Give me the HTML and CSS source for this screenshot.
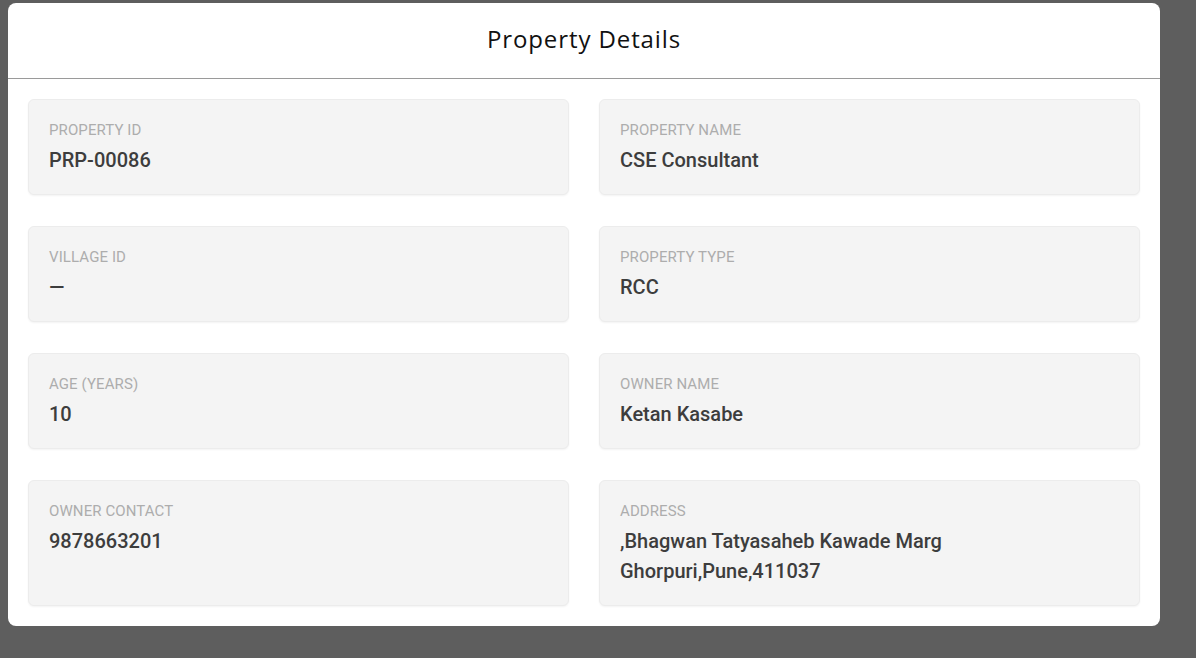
FILE: index.html
```html
<!DOCTYPE html>
<html>
<head>
<meta charset="utf-8">
<link rel="stylesheet" href="styles.css">
</head>
<body>
<div class="modal">
  <div class="modal-header"><h2 class="title">Property Details</h2></div>
  <div class="modal-body">
    <div class="card"><div class="label">Property ID</div><div class="value">PRP-00086</div></div>
    <div class="card"><div class="label">Property Name</div><div class="value">CSE Consultant</div></div>
    <div class="card"><div class="label">Village ID</div><div class="value">—</div></div>
    <div class="card"><div class="label">Property Type</div><div class="value">RCC</div></div>
    <div class="card"><div class="label">Age (Years)</div><div class="value">10</div></div>
    <div class="card"><div class="label">Owner Name</div><div class="value">Ketan Kasabe</div></div>
    <div class="card"><div class="label">Owner Contact</div><div class="value">9878663201</div></div>
    <div class="card"><div class="label">Address</div><div class="value">,Bhagwan Tatyasaheb Kawade Marg<br>Ghorpuri,Pune,411037</div></div>
  </div>
</div>
</body>
</html>
```
FILE: styles.css
```css
html, body { margin: 0; padding: 0; }
body {
  background: #5e5e5e;
  font-family: Roboto, "Liberation Sans", sans-serif;
  width: 1196px;
  height: 658px;
  overflow: hidden;
}
.modal {
  margin: 3px 0 0 8px;
  width: 1152px;
  background: #fff;
  border-radius: 8px;
  overflow: hidden;
}
.modal-header {
  height: 76px;
  border-bottom: 1px solid #9a9a9a;
  display: flex;
  align-items: center;
  justify-content: center;
  padding-bottom: 4px;
  box-sizing: border-box;
}
.title {
  margin: 0;
  font-family: "Open Sans", "Liberation Sans", sans-serif;
  font-weight: 400;
  font-size: 24px;
  color: #111;
  letter-spacing: 0.9px;
}
.modal-body {
  padding: 20px;
  display: grid;
  grid-template-columns: 1fr 1fr;
  column-gap: 30px;
  row-gap: 31px;
}
.card {
  background: #f4f4f4;
  border: 1px solid #ececec;
  border-radius: 6px;
  padding: 20px 20px 19px 20px;
  box-shadow: 0 1px 2px rgba(0,0,0,0.05);
}
.label {
  font-size: 15px;
  line-height: 20px;
  color: #adadad;
  text-transform: uppercase;
  margin-bottom: 5px;
  font-weight: 400;
  letter-spacing: 0.1px;
}
.value {
  font-size: 20px;
  line-height: 30px;
  color: #3d3d3d;
  font-weight: 500;
}
```
